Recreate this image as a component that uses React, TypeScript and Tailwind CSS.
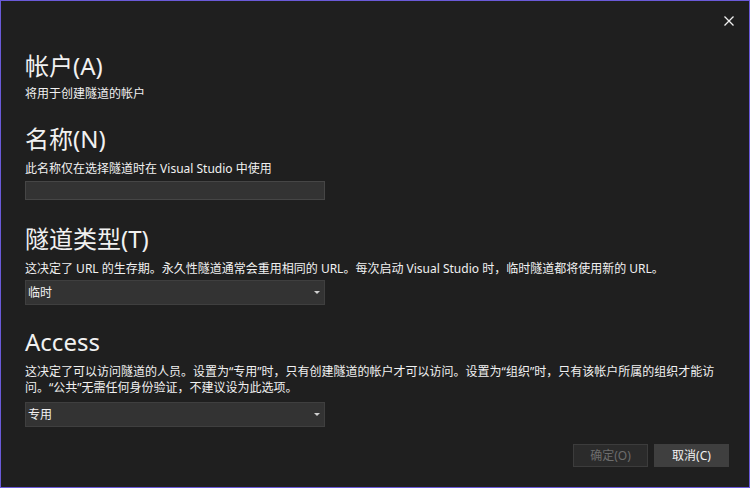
import React from "react";

const font = {
  fontFamily: '"Segoe UI", "Noto Sans", "Noto Sans CJK SC", sans-serif',
};

const Heading: React.FC<{ children: React.ReactNode; className?: string }> = ({ children, className = "" }) => (
  <div className={`h-[28px] text-[24px] leading-[28px] text-[#f1f1f1] whitespace-nowrap ${className}`}>{children}</div>
);

const Desc: React.FC<{ children: React.ReactNode; className?: string }> = ({ children, className = "" }) => (
  <div className={`text-[12px] leading-[16px] text-[#f1f1f1] ${className}`}>{children}</div>
);

const Select: React.FC<{ value: string; className?: string }> = ({ value, className = "" }) => (
  <div
    className={`w-[300px] h-[25px] bg-[#333333] border border-[#3f3f3f] flex items-center justify-between pl-[2px] pr-[4px] ${className}`}
  >
    <span className="text-[12px] leading-[16px] text-[#f1f1f1]">{value}</span>
    <svg width="6" height="3" viewBox="0 0 6 3">
      <path d="M0 0 H6 L3 3 Z" fill="#d0d0d0" />
    </svg>
  </div>
);

export default function App() {
  return (
    <div
      className="w-[750px] h-[488px] bg-[#1f1f1f] border border-[#6a5ad8] relative overflow-hidden"
      style={font}
    >
      <button className="absolute right-[15px] top-[15px] w-[10px] h-[10px] flex items-center justify-center">
        <svg width="10" height="10" viewBox="0 0 10 10">
          <path d="M0.5 0.5 L9.5 9.5 M9.5 0.5 L0.5 9.5" stroke="#f1f1f1" strokeWidth="1.3" />
        </svg>
      </button>

      <div className="pt-[51px] pl-[24px] flex flex-col">
        <Heading>帐户(A)</Heading>
        <Desc className="mt-[6px]">将用于创建隧道的帐户</Desc>

        <Heading className="mt-[23px]">名称(N)</Heading>
        <Desc className="mt-[8px]">此名称仅在选择隧道时在 Visual Studio 中使用</Desc>
        <div className="mt-[4px] w-[300px] h-[19px] bg-[#333333] border border-[#464646]" />

        <Heading className="mt-[25px]">隧道类型(T)</Heading>
        <Desc className="mt-[8px] whitespace-nowrap">
          这决定了 URL 的生存期。永久性隧道通常会重用相同的 URL。每次启动 Visual Studio 时，临时隧道都将使用新的 URL。
        </Desc>
        <Select value="临时" className="mt-[3px]" />

        <Heading className="mt-[23px]">Access</Heading>
        <Desc className="mt-[8px] w-[700px]">
          这决定了可以访问隧道的人员。设置为“专用”时，只有创建隧道的帐户才可以访问。设置为“组织”时，只有该帐户所属的组织才能访
          <br />
          问。“公共”无需任何身份验证，不建议设为此选项。
        </Desc>
        <Select value="专用" className="mt-[6px]" />
      </div>

      <div className="mt-[17px] flex justify-end gap-[6px] pr-[20px]">
        <button className="w-[75px] h-[23px] bg-[#2b2b2b] border border-[#3c3c3c] text-[12px] text-[#6d6d6d] leading-[16px]">
          确定(O)
        </button>
        <button className="w-[75px] h-[23px] bg-[#3f3f3f] border border-[#3f3f3f] text-[12px] text-[#f1f1f1] leading-[16px]">
          取消(C)
        </button>
      </div>
    </div>
  );
}
